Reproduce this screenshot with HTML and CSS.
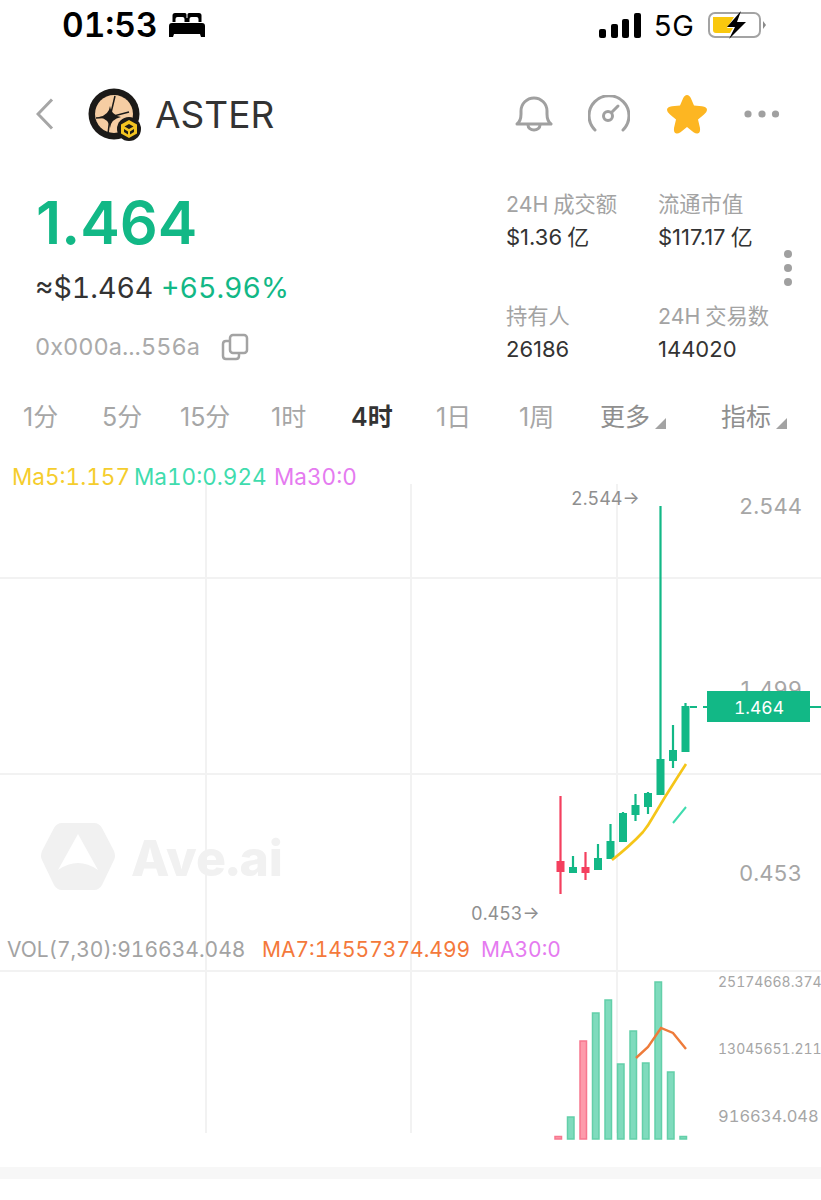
FILE: index.html
```html
<!DOCTYPE html>
<html lang="zh-CN">
<head>
  <meta charset="UTF-8">
  <meta name="viewport" content="width=device-width, initial-scale=1.0">
  <title>ASTER - Ave.ai</title>
  <link rel="stylesheet" href="styles.css">
</head>
<body>
  <div class="status-bar">
    <div class="status-left">
      <span class="clock">01:53</span>
      <svg class="bed" width="36" height="24" viewBox="0 0 36 24"><path d="M6 0h10q1.500 0 1.500 1.500V5h1V1.500Q18.500 0 20 0h10q2.500 0 2.500 2.500V9h-3V6q0-2-2-2h-5q-2 0-2 2v3h-5V6q0-2-2-2H8.500q-2 0-2 2v3h-3V2.500Q3.500 0 6 0zM3 10h30q3 0 3 3v11h-4l-1-3H5l-1 3H0V13q0-3 3-3z"/></svg>
    </div>
    <div class="status-right">
      <div class="signal"><i class="s1"></i><i class="s2"></i><i class="s3"></i><i class="s4"></i></div>
      <span class="net">5G</span>
      <svg class="battery" width="60" height="28" viewBox="0 0 60 28">
        <rect x="2" y="2" width="51" height="24" rx="6" fill="none" stroke="#a3a3a3" stroke-width="2"/>
        <path d="M6 6h21l-7 11h6l-3 5H9q-3 0-3-3z" fill="#f9c80e"/>
        <path d="M56 10l3 4-3 4z" fill="#8a8a8a"/>
        <path d="M34 0L20 16h8l-6 12 17-17h-9z" fill="#000"/>
      </svg>
    </div>
  </div>

  <header class="top-nav">
    <div class="token">
      <svg class="back" width="18" height="32" viewBox="0 0 18 32"><path d="M16 1.500L2 16l14 14.500" fill="none" stroke="#a6a6a6" stroke-width="3"/></svg>
      <svg class="avatar" width="56" height="56" viewBox="0 0 56 56">
        <circle cx="26" cy="28" r="25.500" fill="#1c1a18"/>
        <circle cx="26" cy="28" r="19" fill="#f6cda3"/>
        <path d="M27 10L22 31 41 26M22 31L20 48M22 31L8 32" fill="none" stroke="#1c1a18" stroke-width="1.500"/>
        <path d="M22 20Q23 29 33 31 23 33 22 42 21 33 11 31 21 29 22 20z" fill="#1c1a18"/>
        <circle cx="41" cy="43" r="12" fill="#1c1a18"/>
        <path d="M41 34l8 4.500v9L41 52l-8-4.500v-9zM41 38l-4.500 2.500 4.500 2.500 4.500-2.500zM36 43v3l4 2.500v-3zM46 43v3l-4 2.500v-3z" fill="#f3c421" fill-rule="evenodd"/>
      </svg>
      <span class="token-name">ASTER</span>
    </div>
    <div class="nav-icons">
      <svg width="38" height="38" viewBox="0 0 38 38" fill="none" stroke="#a0a0a0" stroke-width="3" stroke-linecap="round"><path d="M2 29q4-3 4-10v-3a13 13 0 0 1 26 0v3q0 7 4 10z" stroke-linejoin="round"/><path d="M13 30a6 5 0 0 0 12 0"/></svg>
      <svg width="42" height="38" viewBox="1 0 42 38" fill="none" stroke="#a0a0a0" stroke-width="3" stroke-linecap="round"><path d="M8 35a20 20 0 1 1 28 0"/><circle cx="21" cy="21" r="4.500"/><path d="M25 17l6-6"/></svg>
      <svg width="44" height="42" viewBox="0 0 44 42"><path d="M22 2q2.500 0 4 3.500l3 7 8 .8q5 .7 5 3.700 0 2-3 4.500l-6 5 2 8.500q.6 5-2.500 5.500-1.500.3-4-1.200L22 34l-6.500 5.300q-2.500 1.500-4 1.200-3.100-.5-2.500-5.500l2-8.500-6-5q-3-2.500-3-4.500 0-3 5-3.700l8-.8 3-7Q19.500 2 22 2z" fill="#fdb622"/></svg>
      <svg width="36" height="10" viewBox="0 0 36 10" fill="#a0a0a0"><circle cx="4" cy="5" r="3.600"/><circle cx="18" cy="5" r="3.600"/><circle cx="31.500" cy="5" r="3.600"/></svg>
    </div>
  </header>

  <section class="summary">
    <div class="price-box">
      <div class="price">1.464</div>
      <div class="price-sub"><span>≈$1.464</span> <span class="up">+65.96%</span></div>
      <div class="address">
        <span>0x000a...556a</span>
        <svg width="28" height="28" viewBox="0 0 28 28" fill="none" stroke="#a3a3a3" stroke-width="2.500" stroke-linejoin="round"><rect x="9" y="2" width="17" height="18" rx="3"/><path d="M9 8H5q-3 0-3 3v12q0 3 3 3h10q3 0 3-3v-3"/></svg>
      </div>
    </div>
    <div class="stats">
      <div class="stat"><div class="stat-label">24H 成交额</div><div class="stat-value">$1.36 亿</div></div>
      <div class="stat"><div class="stat-label">流通市值</div><div class="stat-value">$117.17 亿</div></div>
      <div class="stat"><div class="stat-label">持有人</div><div class="stat-value">26186</div></div>
      <div class="stat"><div class="stat-label">24H 交易数</div><div class="stat-value">144020</div></div>
      <div class="stat-more"><i></i><i></i><i></i></div>
    </div>
  </section>

  <nav class="periods">
    <span>1分</span>
    <span>5分</span>
    <span>15分</span>
    <span>1时</span>
    <span class="active">4时</span>
    <span>1日</span>
    <span>1周</span>
    <span class="drop">更多</span>
    <span class="drop">指标</span>
  </nav>

  <section class="chart">
    <svg width="821" height="716" viewBox="0 460 821 716">
      <!-- grid -->
      <g stroke="#f2f2f2" stroke-width="2">
        <path d="M206 484V1133M411 484V1133M617 484V1133"/>
        <path d="M0 578H821M0 774H821M0 971H821"/>
      </g>

      <!-- watermark -->
      <path d="M62 823h32q5 0 8 5l12 23q2 5 0 9l-12 25q-3 5-8 5H62q-5 0-8-5L42 860q-2-4 0-9l12-23q3-5 8-5zM78 834L58 870q10-7 20-7t20 7z" fill="#f1f1f1" fill-rule="evenodd"/>
      <text class="mark" x="131" y="876">Ave.ai</text>

      <!-- legends -->
      <text class="legend" x="12" y="485" fill="#f5cd2d">Ma5:1.157</text>
      <text class="legend" x="134" y="485" fill="#3fdcae">Ma10:0.924</text>
      <text class="legend" x="274" y="485" fill="#e57bf0">Ma30:0</text>
      <text class="legend-vol" x="7" y="957" fill="#a3a3a3">VOL(7,30):916634.048</text>
      <text class="legend-vol" x="262" y="957" fill="#f4793b">MA7:14557374.499</text>
      <text class="legend-vol" x="481" y="957" fill="#e57bf0">MA30:0</text>

      <!-- axis -->
      <text class="axis" x="739" y="514">2.544</text>
      <text class="axis" x="739" y="697">1.499</text>
      <text class="axis" x="739" y="881">0.453</text>
      <text class="extreme" x="571" y="505">2.544→</text>
      <text class="extreme" x="471" y="920">0.453→</text>
      <text class="axis-vol" x="718" y="987">25174668.374</text>
      <text class="axis-vol" x="718" y="1054">13045651.211</text>
      <text class="axis-vol-low" x="718" y="1122">916634.048</text>

      <!-- candles -->
      <g fill="#12b886" stroke="#12b886" stroke-width="2.200">
        <path d="M573 856V868M598 844V859M610.500 824V842M623 812V814M635.500 794V821M648 792V814M660.500 506V760M673 725V768M685.500 703V707" fill="none"/>
      </g>
      <g fill="#12b886">
        <rect x="569" y="867" width="8" height="6"/>
        <rect x="594" y="858" width="8" height="12"/>
        <rect x="606.500" y="841" width="8" height="18"/>
        <rect x="619" y="813" width="8" height="29"/>
        <rect x="631.500" y="805" width="8" height="10"/>
        <rect x="644" y="793" width="8" height="14"/>
        <rect x="656.500" y="759" width="8" height="36"/>
        <rect x="669" y="750" width="8" height="11"/>
        <rect x="681.500" y="706" width="8" height="46"/>
      </g>
      <path d="M560.500 796V894M585.500 852V880" stroke="#f43f5e" stroke-width="2.200"/>
      <g fill="#f43f5e">
        <rect x="556.500" y="861" width="8" height="11"/>
        <rect x="581.500" y="867" width="8" height="6"/>
      </g>
      <path d="M612 860Q630 846 643 832 648 826 653 817L665 797 677 778 686 764" fill="none" stroke="#f5c518" stroke-width="2.600"/>
      <path d="M673 823L686 807" stroke="#3fdcae" stroke-width="2"/>

      <!-- last price -->
      <path d="M690 707H697M703 707H707M810 707H821" stroke="#12b886" stroke-width="2"/>
      <rect x="707" y="691" width="103" height="31" fill="#12b886"/>
      <text class="last" x="759" y="714">1.464</text>

      <!-- volume -->
      <g fill="#7fdbbd" stroke="#63cfa9" stroke-width="1.500">
        <rect x="567.500" y="1117" width="6.500" height="22"/>
        <rect x="592.500" y="1013" width="6.500" height="126"/>
        <rect x="605" y="1000" width="6.500" height="139"/>
        <rect x="617.500" y="1064" width="6.500" height="75"/>
        <rect x="630" y="1031" width="6.500" height="108"/>
        <rect x="642.500" y="1063" width="6.500" height="76"/>
        <rect x="655" y="982" width="6.500" height="157"/>
        <rect x="667.500" y="1072" width="6.500" height="67"/>
        <rect x="680" y="1136.500" width="6.500" height="2.500"/>
      </g>
      <g fill="#fd9bab" stroke="#f7778f" stroke-width="1.500">
        <rect x="555" y="1136.500" width="6.500" height="2.500"/>
        <rect x="580" y="1041" width="6.500" height="98"/>
      </g>
      <path d="M636 1058L648 1047 661 1028 673 1033 686 1049" fill="none" stroke="#ee7b3a" stroke-width="2.400"/>
    </svg>
  </section>

  <div class="footer-band"></div>
</body>
</html>
```

FILE: styles.css
```css
body { margin: 0; background-color: #fff; font-family: 'Inter', 'Noto Sans CJK SC', sans-serif; font-variant-numeric: tabular-nums; color: #333; }

.status-bar { height: 50px; display: flex; justify-content: space-between; align-items: center; padding-left: 62px; padding-right: 54px; }
.status-left { display: flex; align-items: center; gap: 11px; }
.clock { font-size: 33.500px; font-weight: 600; color: #000; }
.status-right { display: flex; align-items: center; }
.signal { display: flex; align-items: flex-end; gap: 4.500px; height: 25px; margin-right: 13px; }
.signal i { display: block; width: 7px; background-color: #000; border-radius: 2px; }
.s1 { height: 9px; }
.s2 { height: 14px; }
.s3 { height: 19px; }
.s4 { height: 25px; }
.net { font-size: 29px; color: #000; margin-right: 13px; }

.top-nav { height: 54px; margin-top: 37px; display: flex; justify-content: space-between; align-items: center; padding-left: 36px; padding-right: 41px; }
.token { display: flex; align-items: center; }
.back { margin-right: 34px; }
.avatar { margin-right: 11px; }
.token-name { font-size: 37px; color: #333; }
.nav-icons { display: flex; align-items: center; gap: 35px; }

.summary { display: flex; justify-content: space-between; margin-top: 48px; padding-left: 35px; }
.price { font-size: 59.500px; font-weight: 600; font-variant-numeric: normal; color: #12b886; line-height: 66px; margin-left: 1px; }
.price-sub { font-size: 28.500px; line-height: 44px; margin-top: 11px; color: #333; }
.up { color: #12b886; }
.address { display: flex; align-items: center; gap: 21px; margin-top: 22px; font-size: 23.500px; color: #aaa; }

.stats { width: 315px; display: grid; grid-template-columns: 152px 163px; grid-template-rows: 112px auto; position: relative; font-variant-numeric: normal; }
.stat-label { font-size: 21.300px; line-height: 30px; word-spacing: -1px; color: #a3a3a3; }
.stat-value { font-size: 22px; line-height: 30px; margin-top: 3px; word-spacing: -1px; color: #333; }
.stat-more { position: absolute; left: 278px; top: 61px; display: flex; flex-direction: column; gap: 6px; }
.stat-more i { display: block; width: 8px; height: 8px; border-radius: 50%; background-color: #a0a0a0; }

.periods { display: grid; grid-template-columns: 79px 78px 91px 80px 85px 83px 81px 121px auto; margin-top: 33px; padding-left: 23px; font-size: 25px; font-variant-numeric: normal; line-height: 40px; color: #a6a6a6; }
.active { color: #333; font-weight: 600; }
.drop { position: relative; width: 66px; color: #8f8f8f; }
.drop::after { content: ""; position: absolute; right: 0; bottom: 8px; border-style: solid; border-width: 0 0 11px 11px; border-color: transparent transparent #a3a3a3 transparent; }

.chart { height: 716px; margin-top: 23px; }
.chart svg { display: block; }
.legend { font-size: 22.500px; }
.legend-vol { font-size: 21px; }
.axis { font-size: 22px; fill: #a6a6a6; }
.extreme { font-size: 18px; fill: #8f8f8f; }
.axis-vol { font-size: 14px; fill: #a6a6a6; }
.axis-vol-low { font-size: 16.500px; fill: #a6a6a6; }
.last { font-size: 17.500px; fill: #fff; text-anchor: middle; }
.mark { font-size: 50px; font-weight: 800; fill: #f1f1f1; }

.footer-band { height: 12px; margin-top: -9px; background-color: #f7f7f7; }
```
